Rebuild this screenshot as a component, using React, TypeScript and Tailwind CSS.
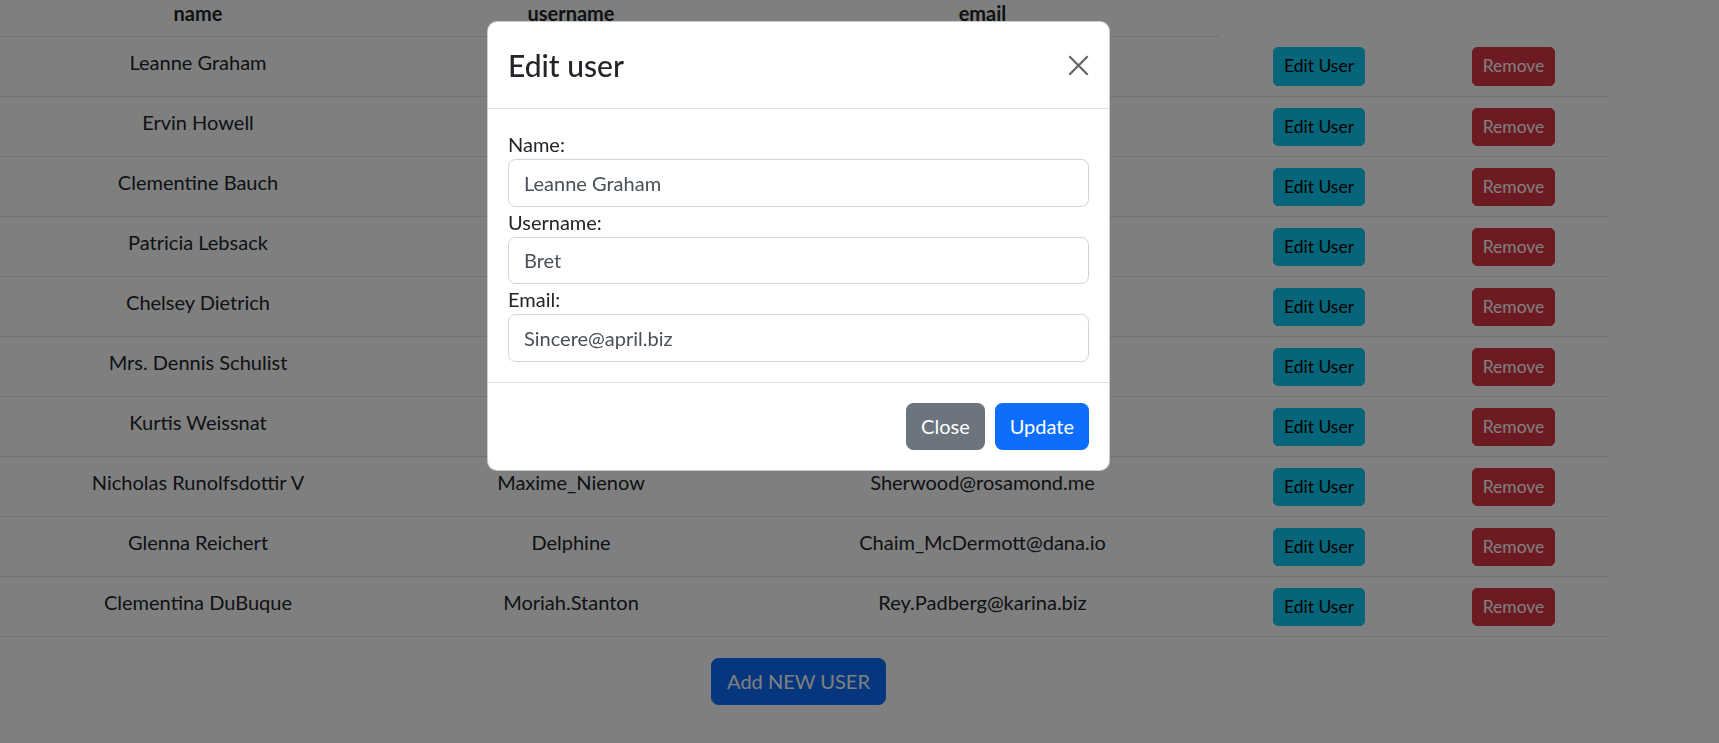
const users = [
  { name: "Leanne Graham", username: "Bret", email: "Sincere@april.biz" },
  { name: "Ervin Howell", username: "Antonette", email: "Shanna@melissa.tv" },
  { name: "Clementine Bauch", username: "Samantha", email: "Nathan@yesenia.net" },
  { name: "Patricia Lebsack", username: "Karianne", email: "Julianne.OConner@kory.org" },
  { name: "Chelsey Dietrich", username: "Kamren", email: "Lucio_Hettinger@annie.ca" },
  { name: "Mrs. Dennis Schulist", username: "Leopoldo_Corkery", email: "Karley_Dach@jasper.info" },
  { name: "Kurtis Weissnat", username: "Elwyn.Skiles", email: "Telly.Hoeger@billy.biz" },
  { name: "Nicholas Runolfsdottir V", username: "Maxime_Nienow", email: "Sherwood@rosamond.me" },
  { name: "Glenna Reichert", username: "Delphine", email: "Chaim_McDermott@dana.io" },
  { name: "Clementina DuBuque", username: "Moriah.Stanton", email: "Rey.Padberg@karina.biz" },
];

function Field({ label, value }: { label: string; value: string }) {
  return (
    <div>
      <label className="block leading-[30px]">{label}</label>
      <input
        readOnly
        value={value}
        className="block w-full h-[47.5px] px-[15px] rounded-[7.5px] border border-[#ced4da] bg-white text-[20px] text-[#495057] outline-none"
      />
    </div>
  );
}

export default function App() {
  return (
    <div className="relative min-h-[743px] bg-white text-[20px] text-[#212529] font-['Lato','Open_Sans',sans-serif] overflow-hidden">
      <div className="w-[1608px]">
        <table className="w-full table-fixed border-collapse">
          <colgroup>
            <col className="w-[396px]" />
            <col className="w-[350px]" />
            <col className="w-[473px]" />
            <col className="w-[200px]" />
            <col className="w-[189px]" />
          </colgroup>
          <thead>
            <tr>
              <th className="h-[36px] align-top leading-[26px] font-bold border-b border-[#dee2e6]">name</th>
              <th className="h-[36px] align-top leading-[26px] font-bold border-b border-[#dee2e6]">username</th>
              <th className="h-[36px] align-top leading-[26px] font-bold border-b border-[#dee2e6]">email</th>
            </tr>
          </thead>
          <tbody>
            {users.map((u) => (
              <tr key={u.name} className="border-b border-[#dee2e6]">
                <td className="h-[60px] pt-[10px] align-top text-center leading-[30px]">{u.name}</td>
                <td className="pt-[10px] align-top text-center leading-[30px]">{u.username}</td>
                <td className="pt-[10px] align-top text-center leading-[30px]">{u.email}</td>
                <td className="pt-[11px] align-top text-center">
                  <button className="h-[38.5px] px-[10px] rounded-[5px] border border-[#0dcaf0] bg-[#0dcaf0] text-black text-[17.5px] leading-[26px]">
                    Edit User
                  </button>
                </td>
                <td className="pt-[11px] align-top text-center">
                  <button className="h-[38.5px] px-[10px] rounded-[5px] border border-[#dc3545] bg-[#dc3545] text-white text-[17.5px] leading-[26px]">
                    Remove
                  </button>
                </td>
              </tr>
            ))}
          </tbody>
        </table>
        <div className="w-[1597px] flex justify-center mt-[21px]">
          <button className="h-[47px] px-[15px] rounded-[7.5px] border border-[#0d6efd] bg-[#0d6efd] text-white leading-[30px]">
            Add NEW USER
          </button>
        </div>
      </div>

      {/* backdrop */}
      <div className="fixed inset-0 bg-black/50" />

      {/* modal */}
      <div className="absolute left-[487px] top-[21px] w-[623px] rounded-[10px] border border-black/20 bg-white">
        <div className="h-[87px] flex items-center justify-between px-[20px] border-b border-[#dee2e6]">
          <h5 className="text-[30px] font-medium leading-[45px]">Edit user</h5>
          <svg width="21" height="21" viewBox="0 0 16 16" className="opacity-60">
            <path d="M1 1 L15 15 M15 1 L1 15" stroke="#000" strokeWidth="1.7" />
          </svg>
        </div>
        <div className="p-[20px] flex flex-col">
          <Field label="Name:" value="Leanne Graham" />
          <Field label="Username:" value="Bret" />
          <Field label="Email:" value="Sincere@april.biz" />
        </div>
        <div className="flex justify-end gap-[10px] px-[20px] pt-[20px] pb-[20px] border-t border-[#dee2e6]">
          <button className="h-[47.5px] px-[15px] rounded-[7.5px] bg-[#6c757d] text-white leading-[30px]">Close</button>
          <button className="h-[47.5px] px-[15px] rounded-[7.5px] bg-[#0d6efd] text-white leading-[30px]">Update</button>
        </div>
      </div>
    </div>
  );
}
